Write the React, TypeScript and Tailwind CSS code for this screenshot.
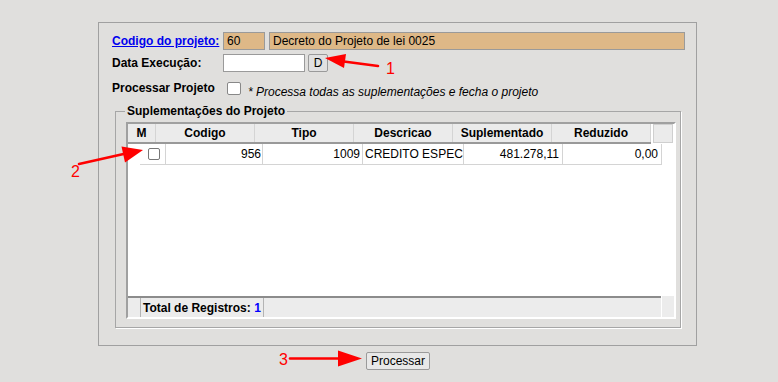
const headers = [
  { label: "M", w: "w-[28px]" },
  { label: "Codigo", w: "w-[99px]" },
  { label: "Tipo", w: "w-[99px]" },
  { label: "Descricao", w: "w-[99px]" },
  { label: "Suplementado", w: "w-[99px]" },
  { label: "Reduzido", w: "w-[99px]" },
];

const Arrows: React.FC = () => {
  return (
    <svg
      className="absolute inset-0 pointer-events-none"
      width={778}
      height={382}
      viewBox="0 0 778 382"
    >
      <g stroke="#f00" strokeWidth={2.6} strokeLinecap="round" fill="#f00">
        <line x1={378} y1={66} x2={340} y2={61} />
        <polygon points="325,58 344,68 346,54" stroke="none" />
        <line x1={79} y1={164} x2={128} y2={153} />
        <polygon points="143,150 125,162.5 121.5,146.5" stroke="none" />
        <line x1={290} y1={358.5} x2={342} y2={358.5} />
        <polygon points="362,358.5 338,350.5 338,366.5" stroke="none" />
      </g>
      <g fill="#f00" fontFamily="'Liberation Sans', Arial, sans-serif" fontSize={16}>
        <text x={386} y={74}>1</text>
        <text x={71} y={177}>2</text>
        <text x={279} y={365}>3</text>
      </g>
    </svg>
  );
};

const Grid: React.FC = () => {
  return (
    <div className="ml-[10px] mt-[4px] mb-[8px] w-[550px] h-[197px] border-2 border-t-[#a0a0a0] border-l-[#a0a0a0] border-r-white border-b-white bg-white flex flex-col">
      <div className="flex h-[20px]">
        <div className="flex w-[523px] h-[20px] bg-[#ebebeb] border-b-2 border-b-[#999]">
          {headers.map((h) => (
            <div
              key={h.label}
              className={`${h.w} h-[18px] flex items-center justify-center border-r border-r-[#d4d4d4] text-[12px] font-bold`}
            >
              {h.label}
            </div>
          ))}
        </div>
        <div className="ml-[2px] w-[20px] h-[19px] bg-[#ebebeb] border border-[#cfcfcf]" />
      </div>

      <div className="flex-1">
        <div className="ml-[12px] flex w-[522px] h-[21px] border-b border-b-[#d4d4d4] text-[12px]">
          <div className="w-[26px] border-r border-r-[#d4d4d4] flex items-center pl-[8px]">
            <div className="w-[12px] h-[12px] rounded-[2px] border border-[#777] bg-white" />
          </div>
          <div className="w-[97px] border-r border-r-[#d4d4d4] flex items-center justify-end pr-[1px]">956</div>
          <div className="w-[100px] border-r border-r-[#d4d4d4] flex items-center justify-end pr-[2px]">1009</div>
          <div className="w-[101px] border-r border-r-[#d4d4d4] flex items-center pl-[2px] overflow-hidden whitespace-nowrap">
            CREDITO ESPEC
          </div>
          <div className="w-[99px] border-r border-r-[#d4d4d4] flex items-center justify-end pr-[3px]">481.278,11</div>
          <div className="w-[99px] border-r border-r-[#d4d4d4] flex items-center justify-end pr-[3px]">0,00</div>
        </div>
      </div>

      <div className="flex h-[21px]">
        <div className="flex w-[533px] bg-[#ececec] border-t-2 border-t-[#8c8c8c]">
          <div className="w-[13px] border-r border-r-[#b4b4b4]" />
          <div className="w-[123px] border-r border-r-[#b4b4b4] flex items-center pl-[2px] text-[12px] font-bold whitespace-nowrap">
            Total de Registros:&nbsp;<span className="text-[#0000ff]">1</span>
          </div>
        </div>
        <div className="flex-1 bg-[#ececec] border-l border-l-white" />
      </div>
    </div>
  );
};

export default function App() {
  return (
    <div className="relative w-[778px] h-[382px] overflow-hidden bg-[#e0dfdd] text-black font-['Liberation_Sans',Arial,sans-serif]">
      <div className="ml-[98px] pt-[22px]">
        <div className="w-[599px] h-[324px] border border-[#a0a0a0] pt-[9px] pl-[13px]">
          <div className="flex items-center h-[18px]">
            <a className="w-[111px] text-[12px] font-bold text-[#0000ee] underline">Codigo do projeto:</a>
            <div className="w-[42px] h-[18px] bg-[#deb887] border border-[#9a9a9a] px-[3px] text-[12px] leading-[16px]">60</div>
            <div className="ml-[4px] w-[416px] h-[18px] bg-[#deb887] border border-[#9a9a9a] px-[3px] text-[12px] leading-[16px]">
              Decreto do Projeto de lei 0025
            </div>
          </div>

          <div className="flex items-center h-[18px] mt-[4px]">
            <div className="w-[111px] text-[12px] font-bold">Data Execução:</div>
            <div className="w-[82px] h-[18px] bg-white border border-[#9a9a9a]" />
            <button className="ml-[3px] w-[20px] h-[18px] bg-[#e1e1e1] border border-[#9a9a9a] rounded-[2px] text-[12px] leading-[16px]">
              D
            </button>
          </div>

          <div className="flex items-start mt-[9px]">
            <div className="w-[115px] text-[12px] leading-[14px] font-bold">Processar Projeto</div>
            <div className="mt-[1px] w-[14px] h-[13px] bg-white border border-[#888] rounded-[2px]" />
            <div className="ml-[7px] mt-[4px] text-[12px] leading-[14px] italic">
              * Processa todas as suplementações e fecha o projeto
            </div>
          </div>

          <fieldset className="ml-[3px] mt-[5px] w-[566px] border border-[#a6a6a6] shadow-[1px_1px_0_#fff]">
            <legend className="ml-[9px] px-[2px] text-[12px] leading-[14px] font-bold bg-[#e0dfdd]">
              Suplementações do Projeto
            </legend>
            <Grid />
          </fieldset>
        </div>

        <div className="flex mt-[6px]">
          <button className="ml-[268px] w-[64px] h-[18px] bg-[#e8e8e8] border border-[#9a9a9a] rounded-[2px] text-[12px] leading-[16px]">
            Processar
          </button>
        </div>
      </div>
      <Arrows />
    </div>
  );
}
